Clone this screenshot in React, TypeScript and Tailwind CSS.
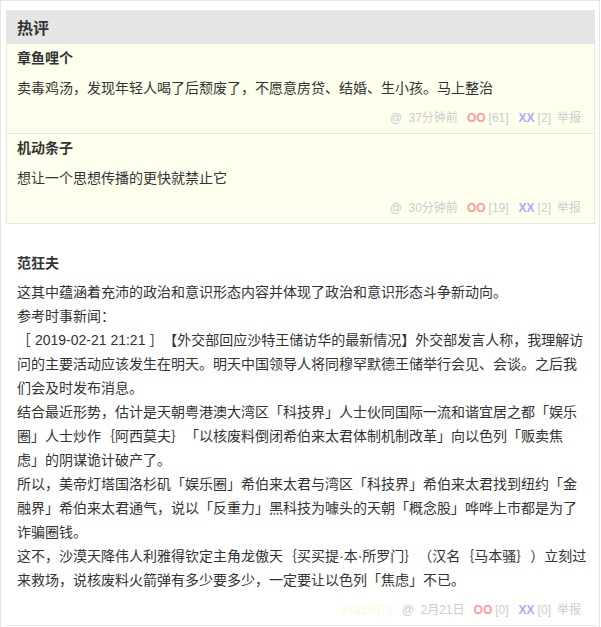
import React from "react";

type Hot = {
  name: string;
  text: string;
  time: string;
  oo: number;
  xx: number;
};

const hotComments: Hot[] = [
  {
    name: "章鱼哩个",
    text: "卖毒鸡汤，发现年轻人喝了后颓废了，不愿意房贷、结婚、生小孩。马上整治",
    time: "37分钟前",
    oo: 61,
    xx: 2,
  },
  {
    name: "机动条子",
    text: "想让一个思想传播的更快就禁止它",
    time: "30分钟前",
    oo: 19,
    xx: 2,
  },
];

const mainLines = [
  "这其中蕴涵着充沛的政治和意识形态内容并体现了政治和意识形态斗争新动向。",
  "参考时事新闻：",
  "［ 2019-02-21 21:21 ］【外交部回应沙特王储访华的最新情况】外交部发言人称，我理解访问的主要活动应该发生在明天。明天中国领导人将同穆罕默德王储举行会见、会谈。之后我们会及时发布消息。",
  "结合最近形势，估计是天朝粤港澳大湾区「科技界」人士伙同国际一流和谐宜居之都「娱乐圈」人士炒作｛阿西莫夫｝「以核废料倒闭希伯来太君体制机制改革」向以色列「贩卖焦虑」的阴谋诡计破产了。",
  "所以，美帝灯塔国洛杉矶「娱乐圈」希伯来太君与湾区「科技界」希伯来太君找到纽约「金融界」希伯来太君通气，说以「反重力」黑科技为噱头的天朝「概念股」哗哗上市都是为了诈骗圈钱。",
  "这不，沙漠天降伟人利雅得钦定主角龙傲天｛买买提·本·所罗门｝（汉名｛马本骚｝）立刻过来救场，说核废料火箭弹有多少要多少，一定要让以色列「焦虑」不已。",
];

function Footer({
  id,
  time,
  oo,
  xx,
  pr = "pr-[3px]",
}: {
  id?: string;
  time: string;
  oo: number;
  xx: number;
  pr?: string;
}) {
  return (
    <div className={"flex justify-end text-[12px] leading-5 text-[#ccc] " + pr}>
      {id && <span className="mr-[8px] text-[#fbf8d6]">{id}</span>}
      <span>@&nbsp; {time}</span>
      <span className="ml-[9px] font-bold text-[#f99]">OO</span>
      <span className="ml-[3px]">[{oo}]</span>
      <span className="ml-[10px] font-bold text-[#aaf]">XX</span>
      <span className="ml-[3px]">[{xx}]</span>
      <span className="ml-[6px]">举报</span>
    </div>
  );
}

export default function App() {
  return (
    <div
      className="min-h-[627px] w-[600px] border-x border-t border-[#e5e5e5] bg-white pl-[5px] pr-[4px] pt-[9px] text-[#333] [text-spacing-trim:space-all]"
      style={{ fontFamily: '"Liberation Sans", "Noto Sans CJK SC", sans-serif' }}
    >
      <div className="border border-[#e5e5e5] bg-[#ffffee]">
        <div className="flex h-[33px] items-center bg-[#e5e5e5] pl-[10px] pt-[2px] text-[16px] font-bold text-[#333]">
          热评
        </div>
        {hotComments.map((c, i) => (
          <div
            key={c.name}
            className={
              "px-[10px] pb-[5px] pt-[4px] " +
              (i < hotComments.length - 1 ? "border-b border-[#e5e5e5]" : "")
            }
          >
            <div className="text-[14px] font-bold leading-5">{c.name}</div>
            <div className="mt-[10px] text-[14px] leading-5">{c.text}</div>
            <div className="mt-[10px]">
              <Footer time={c.time} oo={c.oo} xx={c.xx} />
            </div>
          </div>
        ))}
      </div>

      <div className="mt-[19px] border-b border-[#e5e5e5] pb-[5px] pl-[11px] pr-[7px] pt-[10px]">
        <div className="text-[14px] font-bold leading-5">范狂夫</div>
        <div className="mt-[7px] text-[14px] leading-6">
          {mainLines.map((l, i) => (
            <div key={i}>{l}</div>
          ))}
        </div>
        <div className="mt-[8px]">
          <Footer id="#4319072" time="2月21日" oo={0} xx={0} pr="pr-[7px]" />
        </div>
      </div>
    </div>
  );
}
